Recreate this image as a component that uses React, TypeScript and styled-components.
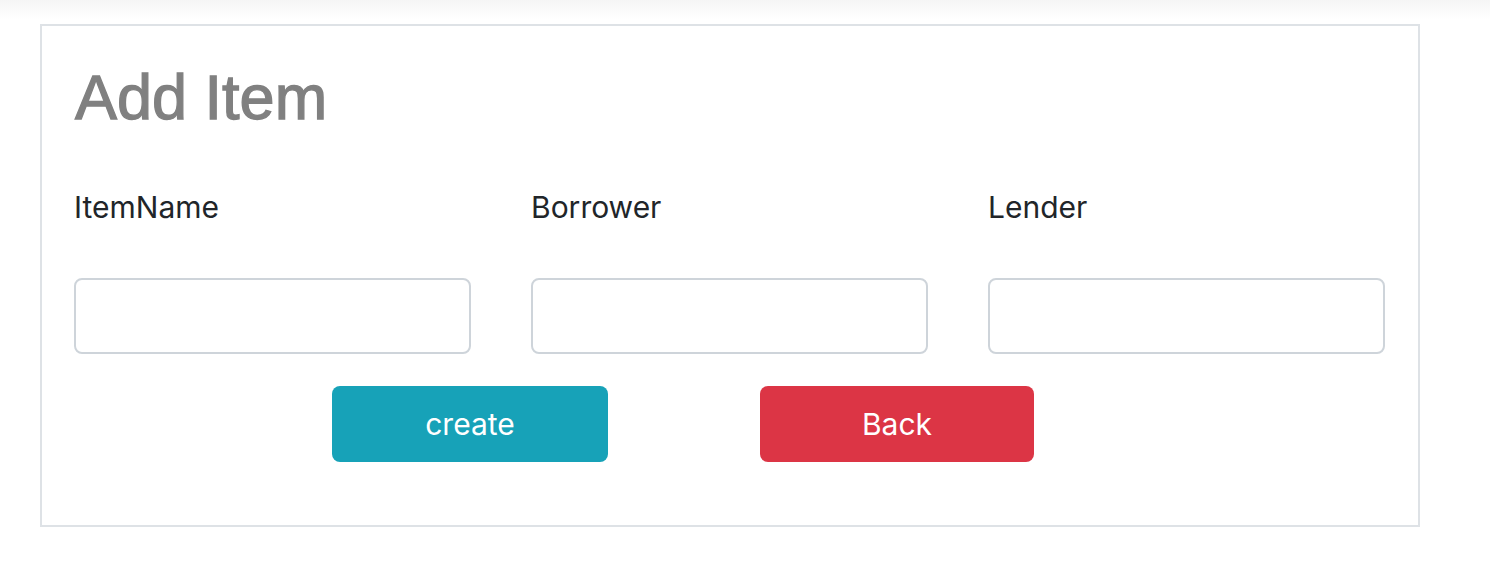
import React from "react";
import styled, { createGlobalStyle } from "styled-components";

const GlobalStyle = createGlobalStyle`
  html, body {
    margin: 0;
    padding: 0;
    background: #ffffff;
  }
  * { box-sizing: border-box; }
`;

const Page = styled.div`
  display: flex;
  flex-direction: column;
  width: 1490px;
`;

const TopShade = styled.div`
  height: 20px;
  background: linear-gradient(#f5f5f5, #ffffff);
`;

const Card = styled.div`
  margin: 4px 70px 0 40px;
  border: 2px solid #dee2e6;
  padding: 34px 32px 63px 32px;
  display: flex;
  flex-direction: column;
`;

const Title = styled.h1`
  margin: 0 0 0 1px;
  font-family: "Liberation Sans", Arial, sans-serif;
  font-weight: 400;
  font-size: 63px;
  line-height: 1.2;
  color: #808080;
  -webkit-text-stroke: 1.3px #808080;
`;

const Fields = styled.div`
  margin-top: 49px;
  display: grid;
  grid-template-columns: repeat(3, 397px);
  column-gap: 60px;
`;

const Field = styled.div`
  display: flex;
  flex-direction: column;
`;

const Label = styled.label`
  font-family: Inter, "Noto Sans", sans-serif;
  font-size: 30px;
  line-height: 45px;
  color: #212529;
  margin-bottom: 48px;
`;

const Input = styled.input`
  height: 76px;
  width: 100%;
  border: 2px solid #ced4da;
  border-radius: 8px;
  background: #ffffff;
  font-family: Inter, sans-serif;
  font-size: 30px;
  padding: 0 24px;
  outline: none;
`;

const Actions = styled.div`
  margin-top: 32px;
  display: flex;
  padding-left: 258px;
  gap: 152px;
`;

const Button = styled.button<{ $variant: "info" | "danger"; $w: number }>`
  width: ${(p) => p.$w}px;
  height: 76px;
  border: none;
  border-radius: 8px;
  background: ${(p) => (p.$variant === "info" ? "#17a2b8" : "#dc3545")};
  color: #ffffff;
  font-family: Inter, "Noto Sans", sans-serif;
  font-size: 30px;
  line-height: 1;
  cursor: pointer;
  display: flex;
  align-items: center;
  justify-content: center;
`;

const fields = ["ItemName", "Borrower", "Lender"];

export default function App() {
  return (
    <>
      <GlobalStyle />
      <Page>
        <TopShade />
        <Card>
          <Title>Add Item</Title>
          <Fields>
            {fields.map((f) => (
              <Field key={f}>
                <Label>{f}</Label>
                <Input type="text" />
              </Field>
            ))}
          </Fields>
          <Actions>
            <Button $variant="info" $w={276}>create</Button>
            <Button $variant="danger" $w={274}>Back</Button>
          </Actions>
        </Card>
      </Page>
    </>
  );
}
